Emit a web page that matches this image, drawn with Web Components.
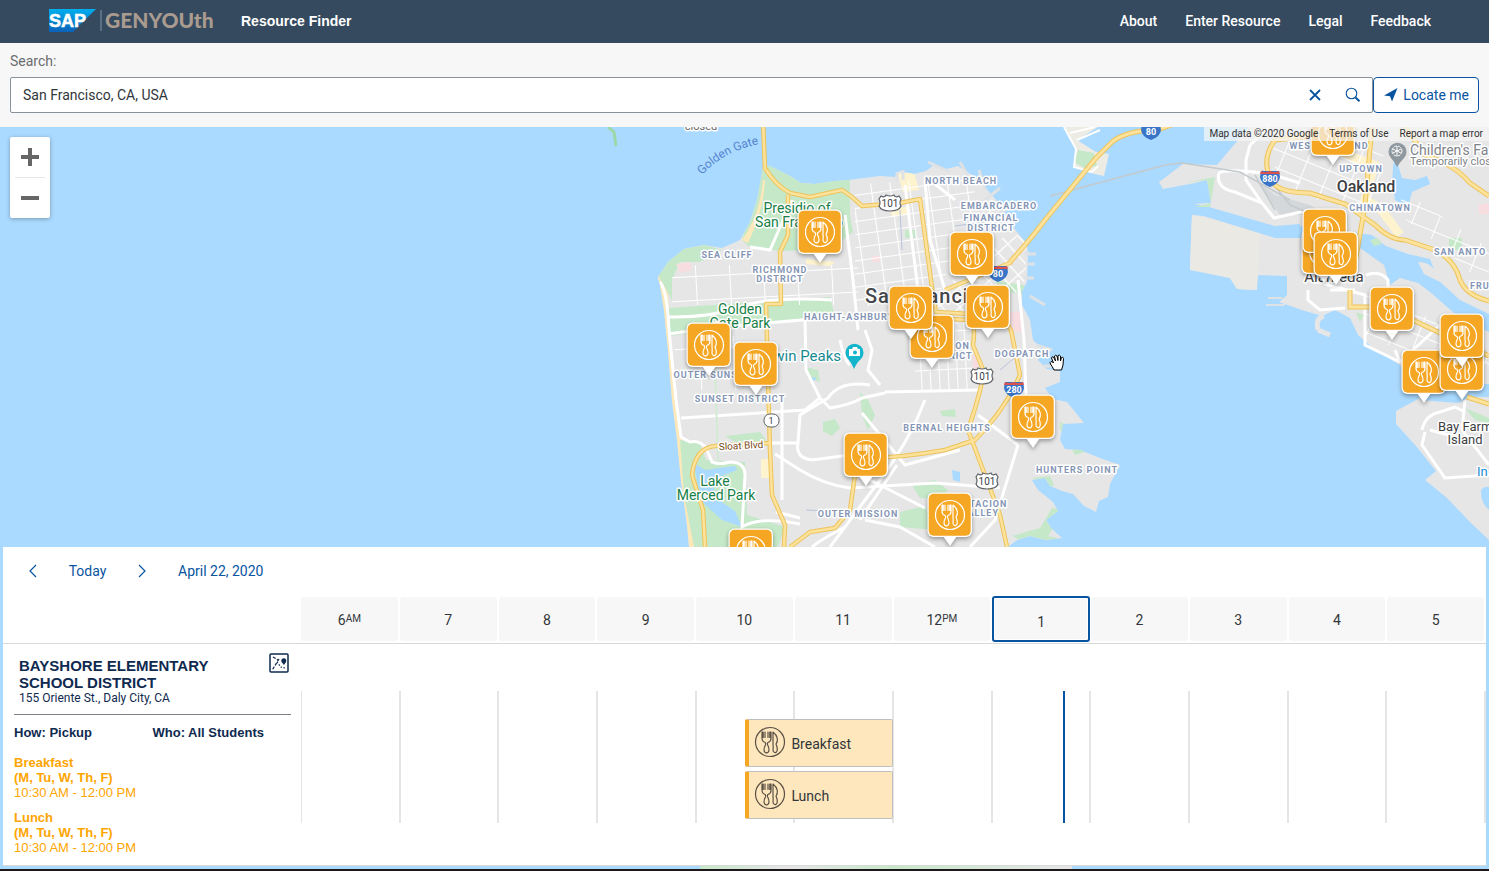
<!DOCTYPE html>
<html lang="en">
<head>
<meta charset="utf-8">
<title>Resource Finder</title>
<style>
  html, body { margin: 0; }
  body { font: 14px/20px Roboto, "Liberation Sans", sans-serif; color: #32363a; background: #aadaff; }
</style>
</head>
<body>
<resource-app></resource-app>

<template id="t-app">
  <style>
    :host { display: flex; flex-direction: column; min-height: 100vh; box-sizing: border-box; border-bottom: 2px solid #1d171c; }
    map-view { flex: 1 0 360px; }
  </style>
  <app-header></app-header>
  <search-bar></search-bar>
  <map-view></map-view>
  <day-planner></day-planner>
</template>

<template id="t-header">
  <style>
    :host { display: block; background: #354a5f; color: #fff; }
    header { display: flex; align-items: center; height: 42px; padding: 0 58px 1px 49px; }
    .logo { display: block; width: 164px; height: 26px; margin-right: 28px; }
    h1 { margin: 0; font: 700 14px/20px "Liberation Sans", sans-serif; flex: 1; }
    nav { display: flex; gap: 28px; }
    a { color: inherit; text-decoration: none; font-weight: 500; }
  </style>
  <header>
    <svg class="logo" viewBox="0 0 164 26" role="img" aria-label="SAP and GENYOUth">
      <defs><linearGradient id="sap" x1="0" y1="0" x2="0" y2="1"><stop offset="0" stop-color="#00aeef"/><stop offset="1" stop-color="#0a62b8"/></linearGradient></defs>
      <path d="M0 1H47L24 24H0Z" fill="url(#sap)"/>
      <text x="0" y="19" font-family="Liberation Sans, sans-serif" font-size="18" font-weight="700" fill="#fff" stroke="#fff" stroke-width=".5">SAP</text>
      <path d="M52 2V23" stroke="#7f97a6" stroke-width="1"/>
      <text x="56" y="20" font-family="Lato, sans-serif" font-size="21" font-weight="900" fill="#a99b8f">GENYOUth</text>
    </svg>
    <h1>Resource Finder</h1>
    <nav><a href="#about">About</a><a href="#enter">Enter Resource</a><a href="#legal">Legal</a><a href="#feedback">Feedback</a></nav>
  </header>
</template>

<template id="t-search">
  <style>
    :host { display: block; background: #f7f7f7; padding: 8px 10px 14px; }
    label { display: block; color: #6a6d70; margin-bottom: 6px; }
    form { display: flex; }
    .field { flex: 1; display: flex; align-items: center; box-sizing: border-box; height: 36px; border: 1px solid #89919a; border-radius: 2px; background: #fff; }
    input { flex: 1; min-width: 0; border: 0; outline: 0; background: none; font: inherit; color: #32363a; padding: 0 12px; }
    button { border: 0; background: none; padding: 0; font: inherit; color: #0854a0; display: flex; align-items: center; justify-content: center; }
    .icon { width: 38px; height: 34px; }
    .locate { height: 36px; padding: 0 9px; gap: 4px; border: 1px solid #0854a0; border-radius: 4px; background: #fff; }
    svg { display: block; }
  </style>
  <label for="q">Search:</label>
  <form>
    <div class="field">
      <input id="q" type="text" value="San Francisco, CA, USA">
      <button class="icon" type="button" aria-label="Clear"><svg width="12" height="12" viewBox="0 0 12 12"><path d="M1 1L11 11M11 1L1 11" stroke="#0854a0" stroke-width="1.8" fill="none"/></svg></button>
      <button class="icon" type="submit" aria-label="Search"><svg width="16" height="16" viewBox="0 0 16 16" fill="none" stroke="#0854a0"><circle cx="6.5" cy="6.5" r="5.3" stroke-width="1.1"/><path d="M10.5 10.5L14.5 14.3" stroke-width="2"/></svg></button>
    </div>
    <button class="locate" type="button"><svg width="16" height="16" viewBox="0 0 16 16"><path d="M14.500 1L1 8.500L7 9.200L9 14.500Z" fill="#0854a0"/></svg>Locate me</button>
  </form>
</template>

<template id="t-utensils">
  <style>
    :host { display: block; width: 32px; height: 32px; color: inherit; }
    svg { display: block; width: 100%; height: 100%; }
  </style>
  <svg viewBox="0 0 32 32" fill="none" stroke="currentColor" stroke-width="1.200" stroke-linejoin="round" stroke-linecap="round">
    <circle cx="16" cy="16" r="14.500"/>
    <path d="M8 6V12.500Q8 15.200 11 16.500Q12 17.200 11.500 18.800Q10 21.500 10 24Q10.300 26.800 12.500 26.800Q14.700 26.800 15 24Q15 21.500 13.600 18.800Q13 17.200 14 16.500Q17 15.200 17 12.500V6M11 6V11.500M14 6V11.500M8 6H9.200V11.500M17 6H15.800V11.500"/>
    <path d="M19 6Q22.500 8.500 23.300 12.500Q23.800 15.500 22 18Q23.600 21.500 23.300 24Q22.800 26.800 21 26.600Q19 26.300 19 24Q19.500 21.500 19 18.500Z"/>
  </svg>
</template>

<template id="t-pin">
  <style>
    :host { position: absolute; display: block; width: 48px; height: 56px; margin: -24px 0 0 -24px; color: #fff; filter: drop-shadow(0 2px 2px rgba(0,0,0,.35)); }
    .shape { display: block; }
    utensils-icon { position: absolute; left: 8px; top: 8px; }
  </style>
  <svg class="shape" width="48" height="56" viewBox="0 0 48 56">
    <path d="M17 45H31L24 55Z" fill="#fff"/>
    <rect x="1.500" y="1.500" width="44.500" height="44.500" rx="6" fill="#fff"/>
    <rect x="2.700" y="2.700" width="42" height="42" rx="5" fill="#f5a623"/>
  </svg>
  <utensils-icon></utensils-icon>
</template>

<template id="t-map">
  <style>
    :host { display: block; position: relative; overflow: hidden; background: #aadaff; }
    .canvas { position: absolute; inset: 0; width: 100%; height: 100%; display: block; }
    .zoom { position: absolute; left: 10px; top: 10px; width: 40px; background: #fff; border-radius: 2px; box-shadow: 0 1px 4px rgba(0,0,0,.3); display: flex; flex-direction: column; align-items: center; }
    .zoom button { width: 40px; height: 40px; border: 0; padding: 0; background: none; display: grid; place-items: center; }
    .zoom hr { width: 30px; height: 1px; margin: 0; border: 0; background: #e6e6e6; }
    .legal { position: absolute; right: 0; top: 0; display: flex; font-size: 10px; line-height: 14px; padding-right: 6px; color: #333; background: rgba(245,245,245,.72); }
    .legal > * { padding-left: 5px; margin-right: 6px; color: inherit; text-decoration: none; }
    .legal > :last-child { margin-right: 0; }
    .cursor { position: absolute; left: 1049px; top: 227px; }
  </style>
  <svg class="canvas" aria-label="Map of San Francisco Bay">
    <defs>
      <pattern id="g1" width="19" height="13" patternUnits="userSpaceOnUse" patternTransform="rotate(-8)"><path d="M0 0H19M0 0V13" stroke="#fff" stroke-width="2.200"/></pattern>
      <pattern id="g2" width="13" height="15" patternUnits="userSpaceOnUse" patternTransform="rotate(-42)"><path d="M0 0H13M0 0V15" stroke="#fff" stroke-width="2.600"/></pattern>
      <pattern id="g3" width="9" height="38" patternUnits="userSpaceOnUse" patternTransform="rotate(-3)"><path d="M0 0H9M0 0V38" stroke="#fff" stroke-width="2"/></pattern>
      <pattern id="g4" width="34" height="24" patternUnits="userSpaceOnUse" patternTransform="rotate(-3)"><path d="M0 0H34M0 0V24" stroke="#fff" stroke-width="2"/></pattern>
      <pattern id="g5" width="24" height="17" patternUnits="userSpaceOnUse" patternTransform="rotate(22)"><path d="M0 0H24M0 0V17" stroke="#fff" stroke-width="2"/></pattern>
      <clipPath id="sf"><path d="M763 167L770 166L778 170L790 176L801 183L815 184L835 181L848 180L880 176L895 177L899 171L914 174L926 171L935 164L942 170L958 166L972 175L985 187L997 201L1006 217L1017 232L1026 243L1028 252L1027 282L1022 291L1022 305L1030 320L1033 340L1041 348L1038 360L1047 369L1060 371L1060 382L1045 388L1053 399L1067 402L1084 423L1063 424L1060 440L1065 449L1080 450L1100 458L1120 465L1110 484L1108 497L1099 501L1096 512L1084 506L1073 494L1062 491L1050 486L1045 478L1032 480L1038 490L1053 502L1058 511L1046 520L1051 528L1062 538L1046 540L1030 536L1017 540L1008 547L1000 600H694L687 525L681 480L677 440L672 400L668 350L664 310L660 285L658 277L668 262L684 249L704 245L722 248L740 240L750 222L757 200Z"/></clipPath>
      <g id="shield101"><path d="M-9-7Q-5-5-4-8Q0-6 4-8Q5-5 9-7L11-4Q9 0 11 3Q9 8 0 8Q-9 8-11 3Q-9 0-11-4Z" fill="#fff" stroke="#5f6368" stroke-width="1.200"/><text y="4" font-size="10" text-anchor="middle" fill="#3c4043" stroke="none">101</text></g>
      <g id="inter"><path d="M-9-7H9L10-1Q9 6 0 9Q-9 6-10-1Z" fill="#3874c8"/><path d="M-9-7Q-5-5 0-7Q5-5 9-7L10-4H-10Z" fill="#d9534f"/></g>
    </defs>
    <g transform="translate(0,-127)" font-family="Roboto, sans-serif">
      <g clip-path="url(#sf)">
        <path d="M600 100H1200V600H600Z" fill="#e6e6e7"/>
        <path d="M658 270L667 282L675 400L682 440L697 547H685L650 300Z" fill="#fce8b8"/>
        <path d="M763 160L800 180L850 176V215L853 232L830 250L780 251L748 246L742 240Z" fill="#c5e8c8"/>
        <path d="M763 180Q760 215 742 240L748 243Q764 210 765 180Z" fill="#fce8b8"/>
        <path d="M655 270L690 240L722 250L700 262L680 262L672 280L672 300Z" fill="#c5e8c8"/>
        <path d="M668 308L830 297L834 313L780 322L669 336Z" fill="#c5e8c8"/>
        <path d="M680 440L700 444L706 460L745 462L747 515L785 527L778 547H694L684 495Z" fill="#c5e8c8"/>
        <path d="M694 463L705 470L735 466L737 470L712 480L716 498L735 511L742 527L722 520L700 500Z" fill="#aadaff"/>
        <path d="M823 422L835 419L840 428L832 436L823 431ZM940 411L955 409L956 417L942 416ZM912 485L935 480L948 490L940 500L920 498ZM900 512L925 506L935 530L900 527ZM725 436L760 432L768 443L735 442ZM806 367L818 370L820 382L809 378ZM860 392L868 400L875 415L868 430L862 415ZM1033 478L1050 476L1054 485L1045 490L1035 484ZM1052 508L1065 510L1048 536L1066 540H1020L1012 536L1040 528ZM905 230H915V238H905ZM882 293H893V302H882ZM995 280L1005 282L1026 286L1024 295L1000 290ZM1060 422L1085 432L1070 436L1060 430ZM1068 442L1085 452L1075 455Z" fill="#c5e8c8"/>
        <path d="M952 470L960 472L960 482L953 480ZM810 378L816 377L815 381Z" fill="#aadaff"/>
        <path d="M898 174L914 172L919 190L903 192ZM761 459H773V478H761ZM890 210L910 206V214L892 217ZM806 259L835 262L830 266L806 264Z" fill="#fdf3cf"/>
        <path d="M676 264L690 262L692 270L680 273ZM1007 313L1022 311L1021 333L1012 330ZM872 256H880V262H872ZM972 355L980 356L978 370L973 368Z" fill="#f7dde0"/>
        <path d="M672 265H858V305H672Z" fill="url(#g4)"/>
        <path d="M674 336H775V390H674Z" fill="url(#g4)"/>
        <path d="M855 184L900 182L960 178L1000 215L950 262L938 300L855 308Z" fill="url(#g1)"/>
        <path d="M1027 240L1026 280L990 328L925 320L960 270L1010 232Z" fill="url(#g2)"/>
        <path d="M915 318H972V392H915Z" fill="url(#g3)"/>
        <g fill="none" stroke="#fff" stroke-width="3">
          <path d="M660 282Q667 290 669 330L676 400L681 437L690 442Q700 440 706 448L712 462Q720 465 730 462Q745 462 745 475L742 527Q760 516 800 524"/>
          <path d="M681 418L805 410L820 398M782 395V500M770 443H798L800 415L828 398Q840 380 870 385"/>
          <path d="M805 318L806 370L820 398L830 408Q850 405 862 398L885 393M865 330L872 350L868 370L880 385M798 443Q795 458 812 460L850 455M775 454L800 470Q825 485 850 488L935 483L1000 488M885 392L980 390M840 340Q845 362 850 365M925 400Q910 440 880 480L830 547M865 520L900 527L935 547M1018 445L995 520L970 547M1018 280L1024 340L1026 395M978 415L1018 445M862 413L905 465L960 450M897 465L860 520M870 480L925 508M792 200L770 250L750 247M845 215L853 280L858 330"/>
          <path d="M776 512L800 518M845 527Q820 540 812 547M668 317Q710 318 740 307T832 300M668 334Q730 325 830 318M930 180L955 200M925 180L930 240L945 290M905 185L918 290"/>
        </g>
        <path d="M715 367L718 460" stroke="#d3ead4" stroke-width="2" fill="none"/>
        <path d="M900 210L902 250M955 226L985 222M1000 370L1018 355M806 510L850 512" stroke="#b9c3dc" stroke-width="1" fill="none"/>
        <g fill="none" stroke-linejoin="round">
          <path d="M763 127L765 168Q775 185 790 193L810 197L842 190L852 197L862 206L900 203L920 199L933 295L936 312L970 314Q976 325 973 345L984 372Q980 395 968 430L985 475L1000 515L1007 547M788 195V235L780 252L781 304H766L770 450L772 495L785 525L784 547M715 446Q695 448 692 475L703 510L705 547M715 446L770 443M790 547L810 532L835 528L850 510L855 475L865 458Q900 458 945 450L975 440Q1005 410 1020 375L1012 335Q1010 315 970 314M930 318L970 320L1000 285M945 290L1012 262" stroke="#edc45b" stroke-width="4.500"/>
          <path d="M763 127L765 168Q775 185 790 193L810 197L842 190L852 197L862 206L900 203L920 199L933 295L936 312L970 314Q976 325 973 345L984 372Q980 395 968 430L985 475L1000 515L1007 547M788 195V235L780 252L781 304H766L770 450L772 495L785 525L784 547M715 446Q695 448 692 475L703 510L705 547M715 446L770 443M790 547L810 532L835 528L850 510L855 475L865 458Q900 458 945 450L975 440Q1005 410 1020 375L1012 335Q1010 315 970 314M930 318L970 320L1000 285M945 290L1012 262" stroke="#fde29b" stroke-width="2.500"/>
        </g>
      </g>
      <path d="M763 120L765 170" stroke="#edc45b" stroke-width="4.500"/><path d="M763 120L765 170" stroke="#fde29b" stroke-width="2.500"/>
      <path d="M928 162L950 172M960 162L968 176M979 170L985 190M1000 188L985 200M1008 208L996 216M1025 254H1036M1026 264H1035M1024 278H1034M1030 296L1045 305M1036 345L1052 350M1044 366H1060M897 172V182M903 170V180" stroke="#dfe2e4" stroke-width="3" fill="none"/>
      <!-- Treasure Island and the East Bay -->
      <path d="M1064 127H1098L1077 140L1096 152L1109 154L1104 176L1086 172L1074 166L1076 148Z" fill="#ecebe4"/>
      <path d="M1078 150L1094 153L1097 166L1084 168L1074 162Z" fill="#c5e8c8"/>
      <path d="M1064 127L1076 149L1074 167L1092 172L1098 166M1077 140L1100 130M1070 133L1095 127" stroke="#fff" stroke-width="2" fill="none"/>
      <path d="M1249 127H1489V540L1470 522L1447 498L1425 480L1436 471L1416 446L1396 424V411L1420 398L1400 365L1375 350L1358 335L1350 318L1335 310L1322 316L1302 310L1279 302L1287 295V276L1258 275L1256 290L1237 289L1230 278L1205 272L1190 268L1192 215L1205 216L1275 236L1300 238V224L1275 226L1209 207L1194 204L1211 203L1207 180L1195 183L1163 189L1159 182L1183 164L1217 165Z" fill="#e6e6e7"/>
      <path d="M1192 215L1260 232L1257 290L1237 289L1230 278L1190 270Z" fill="#ebe9e3"/>
      <path d="M1184 183L1215 177L1210 207H1195L1211 203L1207 180Z" fill="#c5e8c8"/>
      <path d="M1209 208L1275 227L1302 226L1350 232L1372 235L1386 246L1408 254L1430 259L1438 280L1460 300L1489 314V332L1460 318L1430 292L1418 283L1400 278L1390 285L1384 265L1360 248L1310 238L1275 238L1194 213Z" fill="#aadaff"/>
      <path d="M1418 262Q1435 262 1440 282L1424 274Z" fill="#e6e6e7"/>
      <path d="M1395 155L1402 178L1415 180L1427 176L1430 184L1412 192L1408 208L1395 200Q1390 175 1395 155ZM1440 383L1489 384V397H1470L1458 403L1420 400ZM1481 490Q1489 480 1500 500V515Q1480 510 1481 490Z" fill="#aadaff"/>
      <path d="M1449 238H1462V250H1449ZM1370 240L1378 238L1382 244L1374 246ZM1356 312L1364 315L1360 322ZM1494 420L1465 408L1475 420L1492 425Z" fill="#c5e8c8"/>
      <path d="M1478 205L1489 203V214H1479Z" fill="#f7dde0"/>
      <path d="M1340 152L1374 165L1365 200L1380 208L1400 235" stroke="#fdf3cf" stroke-width="9" fill="none"/>
      <path d="M1256 180L1280 215L1325 215L1310 205L1275 195Z" fill="#d4d8da"/>
      <path d="M1265 150L1310 127H1385L1380 215L1330 205L1285 185Z" fill="url(#g5)"/>
      <path d="M1405 192L1489 248V290L1440 245L1395 212Z" fill="url(#g5)"/>
      <path d="M1360 280L1400 300L1440 325L1489 350V375L1400 350L1365 335Z" fill="url(#g5)"/>
      <g fill="none" stroke="#fff" stroke-width="3">
        <path d="M1219 173Q1225 168 1270 174L1300 183M1219 173Q1215 188 1235 192L1262 203L1274 218L1310 210M1250 145L1246 160V180L1262 203M1250 145L1270 127M1308 290V300L1320 310L1345 308M1330 290H1355M1310 280L1365 295V345L1400 362L1440 325M1366 275Q1380 270 1388 280V300M1422 430Q1425 415 1440 412L1455 407L1465 412M1465 400L1462 430L1489 465M1425 432L1422 445L1445 478L1489 475M1430 430L1460 438M1400 362L1395 350"/>
      </g>
      <path d="M1050 196L1165 165L1183 163L1240 172L1290 200M1255 175L1275 210M1262 170L1290 205L1335 225" stroke="#c4c9cc" stroke-width="1.500" fill="none"/>
      <path d="M1010 262Q1030 240 1045 220L1096 158L1112 142Q1125 131 1160 129L1185 120M1323 127L1304 137L1275 140Q1260 160 1272 182Q1280 193 1310 193L1345 204L1375 225Q1390 240 1405 240L1435 250Q1455 260 1460 280Q1466 295 1489 301M1405 127L1425 155Q1455 165 1470 183L1489 196M1350 290V307H1385L1489 356M1353 275L1365 205L1372 127M1467 397L1489 404" stroke="#edc45b" stroke-width="5" fill="none"/>
      <path d="M1010 262Q1030 240 1045 220L1096 158L1112 142Q1125 131 1160 129L1185 120M1323 127L1304 137L1275 140Q1260 160 1272 182Q1280 193 1310 193L1345 204L1375 225Q1390 240 1405 240L1435 250Q1455 260 1460 280Q1466 295 1489 301M1405 127L1425 155Q1455 165 1470 183L1489 196M1350 290V307H1385L1489 356M1353 275L1365 205L1372 127M1467 397L1489 404" stroke="#fde29b" stroke-width="3" fill="none"/>
      <path d="M1318 330Q1315 318 1324 316M1318 330L1330 335" stroke="#e6e6e7" stroke-width="5" fill="none"/>
      <path d="M1268 298H1282M1266 305H1285" stroke="#dfe2e4" stroke-width="2"/>
      <path d="M608 127L614 132L616 146" stroke="#9dd8ab" stroke-width="3" fill="none"/>

      <use href="#shield101" x="890" y="203"/><use href="#shield101" x="982" y="376"/><use href="#shield101" x="987" y="481"/>
      <g fill="#fff" font-size="9" font-weight="700" text-anchor="middle">
        <use href="#inter" x="998" y="273"/><text x="998" y="277">80</text>
        <use href="#inter" x="1151" y="131"/><text x="1151" y="135">80</text>
        <use href="#inter" x="1014" y="389"/><text x="1014" y="393">280</text>
        <use href="#inter" x="1270" y="178"/><text x="1270" y="182">880</text>
      </g>
      <rect x="764" y="414" width="15" height="13" rx="6" fill="#fff" stroke="#5f6368"/><text x="771" y="424" font-size="9" text-anchor="middle" fill="#3c4043">1</text>

      <g stroke="#fff" stroke-width="3" stroke-linejoin="round" paint-order="stroke" text-anchor="middle">
        <g fill="#8595b5" font-size="9" font-weight="700" letter-spacing="1">
          <text x="961" y="184">NORTH BEACH</text><text x="999" y="209">EMBARCADERO</text><text x="991" y="221">FINANCIAL</text><text x="991" y="231">DISTRICT</text>
          <text x="727" y="258">SEA CLIFF</text><text x="780" y="273">RICHMOND</text><text x="780" y="282">DISTRICT</text>
          <text x="849" y="320">HAIGHT-ASHBURY</text><text x="712" y="378">OUTER SUNSET</text><text x="740" y="402">SUNSET DISTRICT</text>
          <text x="948" y="349">MISSION</text><text x="949" y="359">DISTRICT</text><text x="1022" y="357">DOGPATCH</text>
          <text x="947" y="431">BERNAL HEIGHTS</text><text x="1077" y="473">HUNTERS POINT</text><text x="858" y="517">OUTER MISSION</text>
          <text x="978" y="507">VISITACION</text><text x="980" y="516">VALLEY</text>
          <text x="1329" y="149">WEST OAKLAND</text><text x="1361" y="172">UPTOWN</text><text x="1380" y="211">CHINATOWN</text>
          <text x="1434" y="255" text-anchor="start">SAN ANTO</text><text x="1470" y="289" text-anchor="start">FRU</text>
        </g>
        <g fill="#188047" font-size="14">
          <text x="797" y="213">Presidio of</text><text x="799" y="227">San Francisco</text><text x="740" y="314">Golden</text><text x="740" y="328">Gate Park</text>
          <text x="715" y="486">Lake</text><text x="716" y="500">Merced Park</text>
        </g>
        <text x="841" y="361" font-size="15" fill="#178a91" text-anchor="end">Twin Peaks</text>
        <text x="741" y="449" font-size="10" fill="#7a4b16" transform="rotate(-3 741 446)">Sloat Blvd</text>
        <text x="701" y="130" font-size="11" fill="#666">closed</text>
        <text x="865" y="303" font-size="20" font-weight="500" letter-spacing="1" fill="#44474b" text-anchor="start">San Francisco</text>
        <text x="1366" y="192" font-size="16" font-weight="500" fill="#3c4043">Oakland</text>
        <text x="1334" y="282" font-size="15" fill="#3c4043">Alameda</text>
        <g font-size="13" fill="#3c4043"><text x="1438" y="431" text-anchor="start">Bay Farm</text><text x="1465" y="444">Island</text></g>
        <g text-anchor="start"><text x="1410" y="155" font-size="14" fill="#7d8388">Children's Fa</text><text x="1410" y="165" font-size="11" fill="#7d8388">Temporarily clos</text><text x="1477" y="476" font-size="13" fill="#168ad0">In</text></g>
      </g>
      <path id="ggline" d="M702 175Q724 151 760 144" fill="none"/>
      <text font-size="12" fill="#5685cf"><textPath href="#ggline">Golden Gate</textPath></text>
      <path d="M854 369Q851 362 848 359A9 9 0 1 1 861 359Q857 362 854 369Z" fill="#12b5cb"/>
      <path d="M849 349H852L853 347H857L858 349H860V356H849Z" fill="#fff"/><circle cx="855" cy="352.500" r="2" fill="#12b5cb"/>
      <path d="M1397 167Q1395 162 1391 158A9 9 0 1 1 1404 158Q1400 162 1397 167Z" fill="#8e989e"/>
      <g fill="none" stroke="#fff" stroke-width="1"><circle cx="1397" cy="151" r="5" stroke-dasharray="3 1"/><path d="M1397 146V156M1393 149L1401 153M1401 149L1393 153"/></g>
    </g>
  </svg>
  <div class="pins"></div>
  <svg class="cursor" width="17" height="18" viewBox="0 0 17 18"><path d="M5 16Q3 12 1.500 10Q.500 8 2 7.500Q3.500 7.500 4.500 9L2.500 4Q3 2 4.500 3L6.500 7L5.500 2Q6.500 .500 8 2L9 6.500V1.500Q10.500 .500 11.500 2V7L12.500 3.500Q14 2.500 14.500 4.500L14 11L12.500 16Z" fill="#fff" stroke="#000" stroke-width="1"/></svg>
  <div class="zoom">
    <button type="button" aria-label="Zoom in"><svg width="18" height="18"><path d="M0 9H18M9 0V18" stroke="#666" stroke-width="4"/></svg></button>
    <hr>
    <button type="button" aria-label="Zoom out"><svg width="18" height="18"><path d="M0 9H18" stroke="#666" stroke-width="4"/></svg></button>
  </div>
  <div class="legal"><span>Map data ©2020 Google</span><a href="#terms">Terms of Use</a><a href="#report">Report a map error</a></div>
</template>

<template id="t-planner">
  <style>
    :host { display: block; padding: 0 3px 3px; background: linear-gradient(90deg, #aadaff 47%, #c5e8c8 47%, #e6e6e7 53%, #c5e8c8 60%, #e6e6e7 72%, #aadaff 72%) bottom / 100% 3px no-repeat #aadaff; }
    .panel { background: #fff; border-bottom: 1px solid #d9d9d9; box-sizing: border-box; }
    .toolbar { display: flex; align-items: center; height: 48px; padding: 0 0 2px 14px; color: #0854a0; }
    .toolbar button { border: 0; background: none; padding: 0; color: inherit; font: inherit; height: 36px; display: grid; place-items: center; }
    .arrow { width: 32px; }
    .today { width: 77px; }
    .date { margin-left: 20px; }
    .row { display: grid; grid-template-columns: 298px 1fr; }
    .head { border-bottom: 1px solid #d9d9d9; height: 46px; }
    .hours { grid-column: 2; list-style: none; margin: 0; padding: 0; display: grid; grid-template-columns: repeat(12, 1fr); }
    .lanes { display: grid; grid-template-columns: 1fr; height: 132px; margin-top: 47px; position: relative; }
    .lines, .events { grid-area: 1 / 1; display: grid; }
    .lines { grid-template-columns: repeat(12, 1fr); border-left: 1px solid #e5e5e5; }
    .lines i { border-right: 2px solid #e5e5e5; }
    .events { grid-template-columns: repeat(24, 1fr); grid-auto-rows: 48px; row-gap: 4px; padding-top: 28px; align-content: start; }
    meal-event { grid-column: 10 / 13; }
    .now { position: absolute; top: 0; bottom: 0; left: 64.300%; width: 2px; background: #0854a0; }
  </style>
  <div class="panel">
    <div class="toolbar">
      <button class="arrow" type="button" aria-label="Previous day"><svg width="8" height="14" viewBox="0 0 8 14"><path d="M7 1L1 7L7 13" fill="none" stroke="currentColor" stroke-width="1.200"/></svg></button>
      <button class="today" type="button">Today</button>
      <button class="arrow" type="button" aria-label="Next day"><svg width="8" height="14" viewBox="0 0 8 14"><path d="M1 1L7 7L1 13" fill="none" stroke="currentColor" stroke-width="1.200"/></svg></button>
      <button class="date" type="button">April 22, 2020</button>
    </div>
    <div class="row head"><ol class="hours"></ol></div>
    <div class="row">
      <resource-card></resource-card>
      <div class="lanes">
        <div class="lines"></div>
        <div class="events"><meal-event>Breakfast</meal-event><meal-event>Lunch</meal-event></div>
        <div class="now"></div>
      </div>
    </div>
  </div>
</template>

<template id="t-hour">
  <style>
    :host { display: block; box-sizing: border-box; height: 44px; margin-right: 2px; border-radius: 3px; background: #f7f7f7; text-align: center; line-height: 46px; white-space: nowrap; }
    :host([current]) { height: 46px; margin: -1px 1px 0 0; border: 2px solid #0854a0; padding: 1px; background-clip: content-box; background-color: #f7f7f7; }
    small { font-size: 10px; line-height: 10px; vertical-align: 3px; }
  </style>
  <slot></slot><small></small>
</template>

<template id="t-event">
  <style>
    :host { display: flex; align-items: center; gap: 5px; box-sizing: border-box; padding-left: 5px; margin-right: 1px; background: #fee6bd; border: 1px solid #bfbfbf; border-left: 4px solid #f5a623; border-radius: 2px; color: #32363a; }
    utensils-icon { color: #5a5145; margin-bottom: 2px; }
    span { padding-top: 2px; }
  </style>
  <utensils-icon></utensils-icon><span><slot></slot></span>
</template>

<template id="t-card">
  <style>
    :host { display: block; padding: 11px 10px 10px 11px; color: #0f2a4f; font-family: "Liberation Sans", sans-serif; }
    .top { display: flex; justify-content: space-between; align-items: flex-start; padding: 2px 2px 9px 5px; border-bottom: 1px solid #7d8187; }
    h2 { margin: 0; font-size: 15px; line-height: 17px; font-weight: 700; white-space: nowrap; }
    address { font: 12px/14px Roboto, sans-serif; }
    button { border: 0; padding: 0; background: none; }
    button svg { display: block; margin-top: -4px; }
    .facts { display: grid; grid-template-columns: 1fr 1fr; font-size: 13px; line-height: 15px; font-weight: 700; margin: 10px 0 15px; }
    .meals { margin: 0; font-size: 13px; line-height: 15px; color: orange; display: grid; row-gap: 10px; }
    p { margin: 0; }
  </style>
  <div class="top">
    <div><h2>BAYSHORE ELEMENTARY<br>SCHOOL DISTRICT</h2><address>155 Oriente St., Daly City, CA</address></div>
    <button type="button" aria-label="Show on map"><svg width="20" height="20" viewBox="0 0 20 20" fill="none" stroke="#0f2a4f"><rect x="1" y="1" width="18" height="18" rx="1" stroke-width="1.500"/><path d="M4 4L9 7M10 6L3.500 16.500" stroke-dasharray="3 1.500" stroke-width="1.200"/><path d="M8 9L12 14L16 15" stroke-dasharray="1.500 1.500" stroke-width="1.200"/><path d="M15 12L12.600 9A2.500 2.500 0 1 1 17 9Z" fill="#0f2a4f" stroke="none"/></svg></button>
  </div>
  <div class="facts"><span>How: Pickup</span><span>Who: All Students</span></div>
  <div class="meals">
    <p><b>Breakfast<br>(M, Tu, W, Th, F)</b><br>10:30 AM - 12:00 PM</p>
    <p><b>Lunch<br>(M, Tu, W, Th, F)</b><br>10:30 AM - 12:00 PM</p>
  </div>
</template>

<script>
  class Base extends HTMLElement {
    constructor() {
      super();
      this.attachShadow({ mode: "open" }).append(document.getElementById(this.constructor.template).content.cloneNode(true));
    }
  }
  class UtensilsIcon extends Base { static template = "t-utensils"; }
  class MapPin extends Base {
    static template = "t-pin";
    connectedCallback() {
      this.style.left = this.getAttribute("x") + "px";
      this.style.top = this.getAttribute("y") + "px";
    }
  }
  class AppHeader extends Base { static template = "t-header"; }
  class SearchBar extends Base { static template = "t-search"; }
  class MapView extends Base {
    static template = "t-map";
    static places = [[820,105],[972,127],[932,210],[911,181],[988,180],[709,218],[756,237],[866,328],[1033,290],[950,388],[751,424],[1333,7],[1324,125],[1325,104],[1336,127],[1392,182],[1424,245],[1462,242],[1462,209]];
    connectedCallback() {
      const pins = this.shadowRoot.querySelector(".pins");
      for (const [x, y] of MapView.places) {
        const pin = document.createElement("map-pin");
        pin.setAttribute("x", x);
        pin.setAttribute("y", y);
        pins.append(pin);
      }
    }
  }
  class HourCell extends Base {
    static template = "t-hour";
    connectedCallback() { this.shadowRoot.querySelector("small").textContent = this.getAttribute("period") || ""; }
  }
  class MealEvent extends Base { static template = "t-event"; }
  class ResourceCard extends Base { static template = "t-card"; }
  class DayPlanner extends Base {
    static template = "t-planner";
    connectedCallback() {
      const hours = this.shadowRoot.querySelector(".hours"), lines = this.shadowRoot.querySelector(".lines");
      [6, 7, 8, 9, 10, 11, 12, 1, 2, 3, 4, 5].forEach(h => {
        const li = document.createElement("li"), cell = document.createElement("hour-cell");
        cell.textContent = h;
        if (h === 6) cell.setAttribute("period", "AM");
        if (h === 12) cell.setAttribute("period", "PM");
        if (h === 1) cell.setAttribute("current", "");
        li.append(cell);
        hours.append(li);
        lines.append(document.createElement("i"));
      });
    }
  }
  class ResourceApp extends Base { static template = "t-app"; }
  customElements.define("utensils-icon", UtensilsIcon);
  customElements.define("map-pin", MapPin);
  customElements.define("app-header", AppHeader);
  customElements.define("search-bar", SearchBar);
  customElements.define("map-view", MapView);
  customElements.define("hour-cell", HourCell);
  customElements.define("meal-event", MealEvent);
  customElements.define("resource-card", ResourceCard);
  customElements.define("day-planner", DayPlanner);
  customElements.define("resource-app", ResourceApp);
</script>
</body>
</html>
